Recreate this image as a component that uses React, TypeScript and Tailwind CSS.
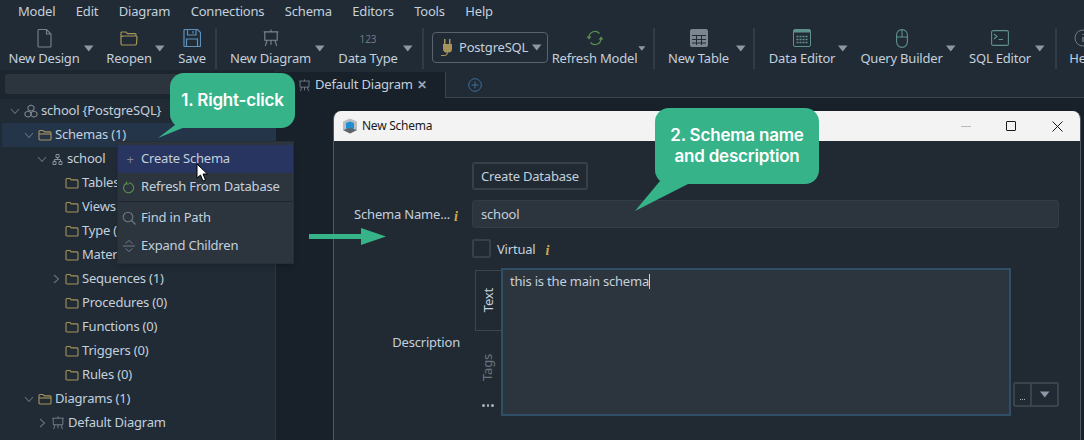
import React from "react";

const ink = "#c3d0dd";

function Caret({ className = "" }: { className?: string }) {
  return (
    <svg width="10" height="7" viewBox="0 0 10 7" className={className}>
      <path d="M0 0.5H9.5L4.75 6.5Z" fill="#8c98a5" />
    </svg>
  );
}

function Folder({ open = false }: { open?: boolean }) {
  return (
    <svg width="14" height="12" viewBox="0 0 14 12" fill="none" stroke="#a8945a" strokeWidth="1.1" className="shrink-0">
      <path d="M1 2.500a1 1 0 0 1 1-1h3l1.200 1.400H12a1 1 0 0 1 1 1V10a1 1 0 0 1-1 1H2a1 1 0 0 1-1-1Z" />
      {open && <path d="M1 5H13" />}
    </svg>
  );
}

function Chevron({ open }: { open: boolean }) {
  return (
    <svg width="10" height="10" viewBox="0 0 10 10" fill="none" stroke="#66717c" strokeWidth="1.1" className="shrink-0">
      {open ? <path d="M1 3l4 4.500L9 3" /> : <path d="M3 1l4.500 4L3 9" />}
    </svg>
  );
}

function Easel({ size = 16, color = "#7b8690" }: { size?: number; color?: string }) {
  return (
    <svg width={size} height={size} viewBox="0 0 16 16" fill="none" stroke={color} strokeWidth="1" className="shrink-0">
      <path d="M8 0.500V2.500M1.500 2.500H14.500M2.500 2.500V10H13.500V2.500M4.500 10L3 15M11.500 10L13 15M8 10V14" />
    </svg>
  );
}

function Info({ className = "" }: { className?: string }) {
  return (
    <span className={`font-['Liberation_Serif',serif] italic font-bold text-[14px] leading-none text-[#d9a94a] ${className}`}>i</span>
  );
}

function Tool({
  label,
  icon,
  caret = true,
  ml,
  labelWidth,
  caretGap = "ml-[3px]",
}: {
  label: string;
  icon: React.ReactNode;
  caret?: boolean;
  ml: string;
  labelWidth: string;
  caretGap?: string;
}) {
  return (
    <div className={`flex items-start shrink-0 ${ml}`}>
      <div className={`flex flex-col items-center ${labelWidth}`}>
        <div className="h-[20px] flex items-center justify-center">{icon}</div>
        <span className="text-[13px] leading-[18px] mt-[1px] whitespace-nowrap">{label}</span>
      </div>
      {caret && <Caret className={`mt-[17px] ${caretGap}`} />}
    </div>
  );
}

function Sep({ ml }: { ml: string }) {
  return <div className={`w-[2px] h-[41px] bg-[#323c46] shrink-0 ${ml}`} />;
}

const tree: { t: string; d: number; k: "folder" | "open" | "db" | "schema" | "easel"; c?: boolean; o?: boolean; sel?: boolean }[] = [
  { t: "school {PostgreSQL}", d: 0, k: "db", c: true, o: true },
  { t: "Schemas (1)", d: 1, k: "open", c: true, o: true, sel: true },
  { t: "school", d: 2, k: "schema", c: true, o: true },
  { t: "Tables (0)", d: 3, k: "folder" },
  { t: "Views (0)", d: 3, k: "folder" },
  { t: "Type (0)", d: 3, k: "folder" },
  { t: "Materialized (0)", d: 3, k: "folder" },
  { t: "Sequences (1)", d: 3, k: "folder", c: true, o: false },
  { t: "Procedures (0)", d: 3, k: "folder" },
  { t: "Functions (0)", d: 3, k: "folder" },
  { t: "Triggers (0)", d: 3, k: "folder" },
  { t: "Rules (0)", d: 3, k: "folder" },
  { t: "Diagrams (1)", d: 1, k: "open", c: true, o: true },
  { t: "Default Diagram", d: 2, k: "easel", c: true, o: false },
];

function TreeIcon({ k }: { k: string }) {
  if (k === "folder") return <Folder />;
  if (k === "open") return <Folder open />;
  if (k === "easel") return <Easel size={14} />;
  if (k === "schema")
    return (
      <svg width="11" height="11" viewBox="0 0 11 11" fill="none" stroke="#87919b" strokeWidth="1" className="shrink-0 ml-[1px] mr-[1px]">
        <path d="M4 0.500H7V3.500H4ZM1 7.500H4V10.500H1ZM7 7.500H10V10.500H7ZM5.500 3.500V5.500M2.500 7.500V5.500H8.500V7.500" />
      </svg>
    );
  return (
    <svg width="14" height="14" viewBox="0 0 14 14" fill="none" stroke="#87919b" strokeWidth="1" className="shrink-0">
      <path d="M7 1l3 1.600v3L7 7.200 4 5.600v-3ZM4 7l3 1.600v3L4 13.200 1 11.600v-3ZM10 7l3 1.600v3l-3 1.600-3-1.600v-3Z" />
    </svg>
  );
}

const indents = ["pl-[10px]", "pl-[24px]", "pl-[37px]", "pl-[51px]"];

export default function App() {
  return (
    <div
      className="relative w-[1084px] h-[440px] overflow-hidden bg-[#212b35] font-['Noto_Sans',sans-serif] text-[13px] tracking-[-0.2px]"
      style={{ color: ink }}
    >
      {/* Menu bar */}
      <div className="h-[24px] flex items-center pl-[18px] gap-[20.5px] text-[13px]">
        {["Model", "Edit", "Diagram", "Connections", "Schema", "Editors", "Tools", "Help"].map((m) => (
          <span key={m}>{m}</span>
        ))}
      </div>

      {/* Toolbar */}
      <div className="h-[46px] flex items-start pt-[4px] overflow-hidden">
        <Tool
          ml="ml-[8px]"
          labelWidth="w-[72px]"
          label="New Design"
          icon={
            <svg width="15" height="19" viewBox="0 0 15 19" fill="none" stroke="#78838e" strokeWidth="1.1">
              <path d="M1 1.500a1 1 0 0 1 1-1h7.500L14 5v12a1 1 0 0 1-1 1H2a1 1 0 0 1-1-1ZM9.500 .5V5H14" />
            </svg>
          }
          caretGap="ml-[4px]"
        />
        <Tool
          ml="ml-[12px]"
          labelWidth="w-[46px]"
          label="Reopen"
          icon={
            <svg width="18" height="15" viewBox="0 0 18 15" fill="none" stroke="#a8945a" strokeWidth="1.2">
              <path d="M1 2a1 1 0 0 1 1-1h4l1.500 1.600H15a1 1 0 0 1 1 1V5M1 2v10.500a1.500 1.500 0 0 0 1.500 1.500H15a1.500 1.500 0 0 0 1.500-1.500L17 6a1 1 0 0 0-1-1H3a1 1 0 0 0-1 1" />
            </svg>
          }
          caretGap="ml-[3px]"
        />
        <Tool
          ml="ml-[13px]"
          labelWidth="w-[28px]"
          label="Save"
          caret={false}
          icon={
            <svg width="18" height="18" viewBox="0 0 18 18" fill="none" stroke="#5d90bd" strokeWidth="1.2">
              <path d="M1 1.500a1 1 0 0 1 1-1h12.500L17.500 3.500V16.500a1 1 0 0 1-1 1H1.500a.5.5 0 0 1-.5-.5ZM4.500 .5V6H13V.5M10 2V4.500M3.500 17.500V10H14.500V17.500" />
            </svg>
          }
        />
        <Sep ml="ml-[9px]" />
        <Tool
          ml="ml-[13px]"
          labelWidth="w-[81px]"
          label="New Diagram"
          icon={<Easel size={18} />}
          caretGap="ml-[4px]"
        />
        <Tool
          ml="ml-[13px]"
          labelWidth="w-[60px]"
          label="Data Type"
          icon={<span className="text-[10px] text-[#6f7a85] mt-[2px] tracking-normal">123</span>}
          caretGap="ml-[5px]"
        />
        <Sep ml="ml-[9px]" />
        <div className="ml-[8px] mt-[4px] w-[116px] h-[31px] shrink-0 border border-[#5a636c] rounded-[4px] flex items-center pl-[7px]">
          <svg width="14" height="20" viewBox="0 0 14 20" fill="#a8945a" className="shrink-0">
            <path d="M4 1h1.500v5H9V1h1.500v5H12v5a3.500 3.500 0 0 1-3.500 3.500H8c0 2.500-2 3.500-4 3.500H1v-1h3c1.500 0 3-.8 3-2.500A3.500 3.500 0 0 1 3 11V6h1Z" />
          </svg>
          <span className="ml-[5px] text-[13px]">PostgreSQL</span>
          <Caret className="ml-[4px]" />
        </div>
        <div className="flex items-start shrink-0 ml-[3px]">
          <div className="flex flex-col items-center w-[87px]">
            <div className="h-[20px] flex items-center">
              <svg width="18" height="16" viewBox="0 0 18 16" fill="none" stroke="#5c8f50" strokeWidth="1.3">
                <path d="M3 7a6 6 0 0 1 10.500-3.500M15 9a6 6 0 0 1-10.500 3.500" />
                <path d="M0.500 6.500H5.500L3 9.500ZM12.500 9.500H17.500L15 6.500Z" fill="#5c8f50" stroke="none" />
              </svg>
            </div>
            <span className="text-[13px] leading-[18px] mt-[1px] whitespace-nowrap">Refresh Model</span>
          </div>
          <Caret className="mt-[17px] scale-75 ml-[-1px]" />
        </div>
        <Sep ml="ml-[6px]" />
        <Tool
          ml="ml-[15px]"
          labelWidth="w-[57px]"
          label="New Table"
          icon={
            <svg width="18" height="18" viewBox="0 0 18 18">
              <rect width="18" height="18" rx="2" fill="#7b8690" />
              <path d="M2 6.500H16M2 10.500H16M2 14H16M6.500 6V16M11.500 6V16" stroke="#212b35" strokeWidth="1" />
            </svg>
          }
          caretGap="ml-[9px]"
        />
        <Sep ml="ml-[7px]" />
        <Tool
          ml="ml-[14px]"
          labelWidth="w-[66px]"
          label="Data Editor"
          icon={
            <svg width="18" height="18" viewBox="0 0 18 18" fill="none" stroke="#5f9090" strokeWidth="1">
              <rect x=".5" y=".5" width="17" height="17" rx="1.500" />
              <path d="M1 2H17" strokeWidth="3" />
              <path d="M3.500 7.500H14.500M3.500 10.500H14.500M3.500 13.500H14.500" strokeDasharray="2 1" strokeWidth="1.500" />
            </svg>
          }
          caretGap="ml-[3px]"
        />
        <Tool
          ml="ml-[13px]"
          labelWidth="w-[81px]"
          label="Query Builder"
          icon={
            <svg width="12" height="19" viewBox="0 0 12 19" fill="none" stroke="#5f9090" strokeWidth="1.1">
              <rect x=".6" y=".6" width="10.800" height="17.800" rx="5.400" />
              <path d="M.6 8H11.400M6 .6V8" />
            </svg>
          }
          caretGap="ml-[4px]"
        />
        <Tool
          ml="ml-[13px]"
          labelWidth="w-[62px]"
          label="SQL Editor"
          icon={
            <svg width="18" height="16" viewBox="0 0 18 16" fill="none" stroke="#5f9090" strokeWidth="1.1">
              <rect x=".6" y=".6" width="16.800" height="14.800" rx="1.500" />
              <path d="M3 4l3 2.500L3 9M7.500 9.500H12" />
            </svg>
          }
          caretGap="ml-[4px]"
        />
        <Sep ml="ml-[10px]" />
        <Tool
          ml="ml-[11px]"
          labelWidth="w-[30px]"
          label="Help"
          caret={false}
          icon={
            <svg width="18" height="18" viewBox="0 0 18 18" fill="none" stroke="#6f7a85" strokeWidth="1">
              <circle cx="9" cy="9" r="8" />
              <path d="M9 8V13M9 5V6" strokeWidth="1.500" />
            </svg>
          }
        />
      </div>

      {/* Workspace */}
      <div className="flex h-[370px]">
        <aside className="w-[276px] shrink-0 border-r border-[#2c353e] flex flex-col">
          <div className="h-[29px] shrink-0 pt-[4px] pl-[5px] bg-[#1d262f]">
            <div className="h-[20px] w-[265px] bg-[#2c353e] rounded-[2px]" />
          </div>
          {tree.map((r) => (
            <div
              key={r.t + r.d}
              className={`h-[24px] flex items-center shrink-0 ${indents[r.d]} ${r.sel ? "bg-[#24354a] ml-[2px] !pl-[22px]" : ""}`}
            >
              <span className="w-[14px] flex shrink-0">{r.c && <Chevron open={!!r.o} />}</span>
              <TreeIcon k={r.k} />
              <span className="ml-[3px] whitespace-nowrap">{r.t}</span>
            </div>
          ))}
        </aside>

        <main className="flex-1 bg-[#18202a]">
          <div className="h-[28px] flex bg-[#212b35] pt-[2px]">
            <div className="w-[170px] h-[26px] bg-[#18202a] border-r border-[#3c454e] flex items-center pl-[22px] gap-[4px]">
              <Easel size={13} />
              <span className="whitespace-nowrap">Default Diagram</span>
              <span className="text-[12px] font-bold text-[#9aa6b2]">✕</span>
            </div>
            <div className="flex-1 border-b border-[#3c454e] h-[26px] pl-[22px] flex items-center">
              <svg width="14" height="14" viewBox="0 0 14 14" fill="none" stroke="#3d6f9c" strokeWidth="1">
                <circle cx="7" cy="7" r="6.300" />
                <path d="M3.500 7H10.500M7 3.500V10.500" />
              </svg>
            </div>
          </div>
        </main>
      </div>

      {/* Dialog window */}
      <div className="absolute left-[333px] top-[111px] w-[748px] h-[340px] bg-[#212a33] border border-[#50575e] border-t-0 rounded-t-[8px] overflow-hidden">
        <div className="h-[30px] bg-[#f3f3f3] flex items-center pl-[8px] text-[#1a1a1a] text-[12px] tracking-[-0.25px]">
          <svg width="16" height="16" viewBox="0 0 16 16" className="shrink-0">
            <path d="M8 0.500L15 3.500V12L8 15.500L1 12V3.500Z" fill="#b9bdc2" />
            <path d="M4 5L8 3.500L12 5V10.500L8 12.500L4 10.500Z" fill="#1f8fcf" />
            <path d="M1 12L8 15.500L15 12L8 10Z" fill="#5d6369" />
          </svg>
          <span className="ml-[4px]">New Schema</span>
          <div className="ml-auto flex items-center">
            <span className="w-[10px] h-px bg-[#b9b9b9] mr-[35px]" />
            <span className="w-[10px] h-[10px] border border-[#1a1a1a] rounded-[1px] mr-[36px]" />
            <svg width="11" height="11" viewBox="0 0 11 11" stroke="#1a1a1a" strokeWidth="1" className="mr-[17px]">
              <path d="M.5.5L10.500 10.500M10.500.5L.5 10.500" />
            </svg>
          </div>
        </div>

        <div className="pt-[21px] pl-[138px] flex flex-col items-start">
          <div className="h-[28px] w-[116px] pt-[2px] border-2 border-[#37404a] rounded-[3px] flex items-center justify-center">
            Create Database
          </div>
          <div className="relative mt-[10px] h-[28px] w-[587px] pt-[2px] bg-[#2c353e] border border-[#333c45] rounded-[3px] flex items-center pl-[8px]">
            school
            <div className="absolute right-full mr-[23px] top-0 pt-[2px] h-full flex items-center whitespace-nowrap">
              Schema Name...
              <Info className="ml-[4px] mt-[4px] absolute left-full" />
            </div>
          </div>
          <div className="mt-[11px] h-[19px] flex items-center">
            <span className="w-[19px] h-[19px] border-2 border-[#37404a] rounded-[2px]" />
            <span className="ml-[6px] mt-[2px]">Virtual</span>
            <Info className="ml-[10px] mt-[4px]" />
          </div>
          <div className="relative mt-[10px] flex items-end">
            <div className="absolute right-full mr-[12px] top-[65px] whitespace-nowrap">Description</div>
            <div className="w-[29px] h-[147px] relative flex flex-col items-end">
              <div className="mt-[1px] w-[26px] h-[61px] border border-r-0 border-[#3c454e] flex items-center justify-center">
                <span className="[writing-mode:vertical-rl] rotate-180">Text</span>
              </div>
              <div className="mt-[21px] w-[26px] h-[30px] flex items-center justify-center text-[#6c757e]">
                <span className="[writing-mode:vertical-rl] rotate-180">Tags</span>
              </div>
              <div className="mt-[22px] w-[26px] flex justify-center gap-[2px]">
                <span className="w-[2.500px] h-[2.500px] bg-[#aab3bc] rounded-full" />
                <span className="w-[2.500px] h-[2.500px] bg-[#aab3bc] rounded-full" />
                <span className="w-[2.500px] h-[2.500px] bg-[#aab3bc] rounded-full" />
              </div>
            </div>
            <div className="w-[510px] h-[148px] bg-[#2c353e] border-2 border-[#2f4f66] pl-[7px] pt-[2px] flex items-start">
              <span>this is the main schema</span>
              <span className="w-px h-[15px] bg-[#c3d0dd] mt-[2px]" />
            </div>
            <div className="ml-[2px] mb-[9px] w-[46px] h-[25px] border-2 border-[#3a424b] rounded-[2px] flex">
              <div className="w-[17px] border-r-2 border-[#3a424b] flex items-end justify-center pb-[5px] gap-px">
                <span className="w-px h-px bg-[#aab3bc]" />
                <span className="w-px h-px bg-[#aab3bc]" />
                <span className="w-px h-px bg-[#aab3bc]" />
              </div>
              <div className="flex-1 flex items-center justify-center">
                <Caret />
              </div>
            </div>
          </div>
        </div>
      </div>

      {/* Context menu */}
      <div className="absolute left-[117px] top-[141px] w-[177px] h-[123px] bg-[#2c353e] border border-[#262e36] pt-[3px] shadow-md">
        <div className="h-[28px] bg-[#283560] flex items-center pl-[7px]">
          <span className="w-[10px] text-center text-[#7d8893] leading-none">+</span>
          <span className="ml-[6px]">Create Schema</span>
        </div>
        <div className="h-[28px] flex items-center pl-[5px]">
          <svg width="12" height="13" viewBox="0 0 12 13" fill="none" stroke="#5c8f50" strokeWidth="1.1">
            <path d="M3 2.500a5 5 0 1 0 3-.7M3.500 .5V3H6" />
          </svg>
          <span className="ml-[6px]">Refresh From Database</span>
        </div>
        <div className="h-px bg-[#1f262d] mb-[2px]" />
        <div className="h-[28px] flex items-center pl-[4px]">
          <svg width="14" height="14" viewBox="0 0 14 14" fill="none" stroke="#6f7a85" strokeWidth="1.1">
            <circle cx="6" cy="6" r="4.800" />
            <path d="M9.500 9.500L13.500 13.500" />
          </svg>
          <span className="ml-[5px]">Find in Path</span>
        </div>
        <div className="h-[28px] flex items-center pl-[5px]">
          <svg width="12" height="12" viewBox="0 0 12 12" fill="none" stroke="#6f7a85" strokeWidth="1">
            <path d="M0 6H12M2.500 3.500L6 .5L9.500 3.500M2.500 8.500L6 11.500L9.500 8.500" />
          </svg>
          <span className="ml-[6px]">Expand Children</span>
        </div>
      </div>

      {/* Mouse cursor */}
      <svg className="absolute left-[196px] top-[163px]" width="12" height="19" viewBox="0 0 12 19">
        <path d="M1 1V15L4.500 12L7 18L9.500 17L7 11H11.500Z" fill="#fff" stroke="#000" strokeWidth="1" />
      </svg>

      {/* Callout 1 */}
      <svg className="absolute left-[150px] top-[120px]" width="60" height="20" viewBox="0 0 60 20">
        <path d="M8 18L40 5V0H25V5Z" fill="#36b389" />
      </svg>
      <div className="absolute left-[170px] top-[73px] w-[125px] h-[55px] rounded-[14px] bg-[#36b389] text-white flex items-center justify-center font-['Inter',sans-serif] font-semibold text-[17px] tracking-[-0.2px]">
        1. Right-click
      </div>

      {/* Callout 2 */}
      <svg className="absolute left-[625px] top-[175px]" width="70" height="40" viewBox="0 0 70 40">
        <path d="M10 36L65 8V0H35V6Z" fill="#36b389" />
      </svg>
      <div className="absolute left-[655px] top-[108px] w-[164px] h-[76px] rounded-[14px] bg-[#36b389] text-white flex items-center justify-center text-center font-['Inter',sans-serif] font-semibold text-[17px] leading-[21px] tracking-[-0.2px]">
        2. Schema name
        <br />
        and description
      </div>

      {/* Arrow */}
      <svg className="absolute left-[309px] top-[228px]" width="78" height="17" viewBox="0 0 78 17">
        <path d="M0 6H52V0L77 8.500L52 17V11H0Z" fill="#36b389" />
      </svg>
    </div>
  );
}
